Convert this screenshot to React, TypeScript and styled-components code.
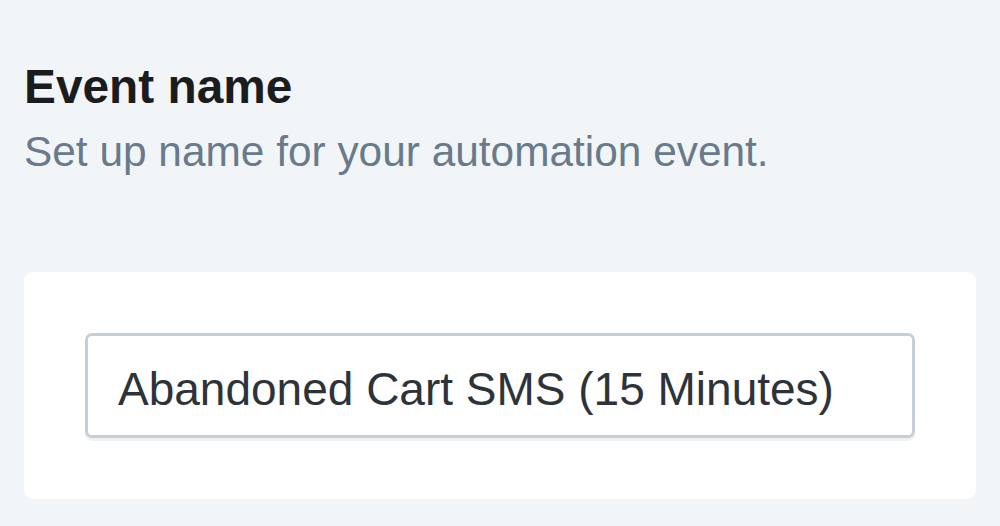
import React from "react";
import styled, { createGlobalStyle } from "styled-components";

const Global = createGlobalStyle`
  html, body { margin: 0; padding: 0; background: #f2f5f8; }
  body { font-family: "Liberation Sans", Arial, Helvetica, sans-serif; }
`;

const Page = styled.div`
  width: 1000px;
  height: 526px;
  box-sizing: border-box;
  padding: 60px 24px 0 24px;
  background: #f2f5f8;
  display: flex;
  flex-direction: column;
  overflow: hidden;
`;

const Title = styled.h2`
  margin: 0;
  font-size: 47.8px;
  line-height: 54px;
  font-weight: 700;
  color: #1b1c1d;
`;

const Subtitle = styled.p`
  margin: 14px 0 0 0;
  font-size: 42.4px;
  line-height: 48px;
  color: #687a8b;
`;

const Card = styled.div`
  margin-top: 96px;
  background: #ffffff;
  border-radius: 9px;
  padding: 61px;
`;

const TextInput = styled.input`
  display: block;
  width: 100%;
  height: 105px;
  box-sizing: border-box;
  border: 3px solid #c6cfd8;
  border-radius: 7px;
  padding: 7px 30px 0 30px;
  font-family: "Liberation Sans", Arial, Helvetica, sans-serif;
  font-size: 46px;
  color: #2e3339;
  background: #ffffff;
  box-shadow: 0 3px 0 rgba(20, 30, 40, 0.06);
  outline: none;
`;

export default function App() {
  return (
    <>
      <Global />
      <Page>
        <Title>Event name</Title>
        <Subtitle>Set up name for your automation event.</Subtitle>
        <Card>
          <TextInput readOnly value="Abandoned Cart SMS (15 Minutes)" />
        </Card>
      </Page>
    </>
  );
}
